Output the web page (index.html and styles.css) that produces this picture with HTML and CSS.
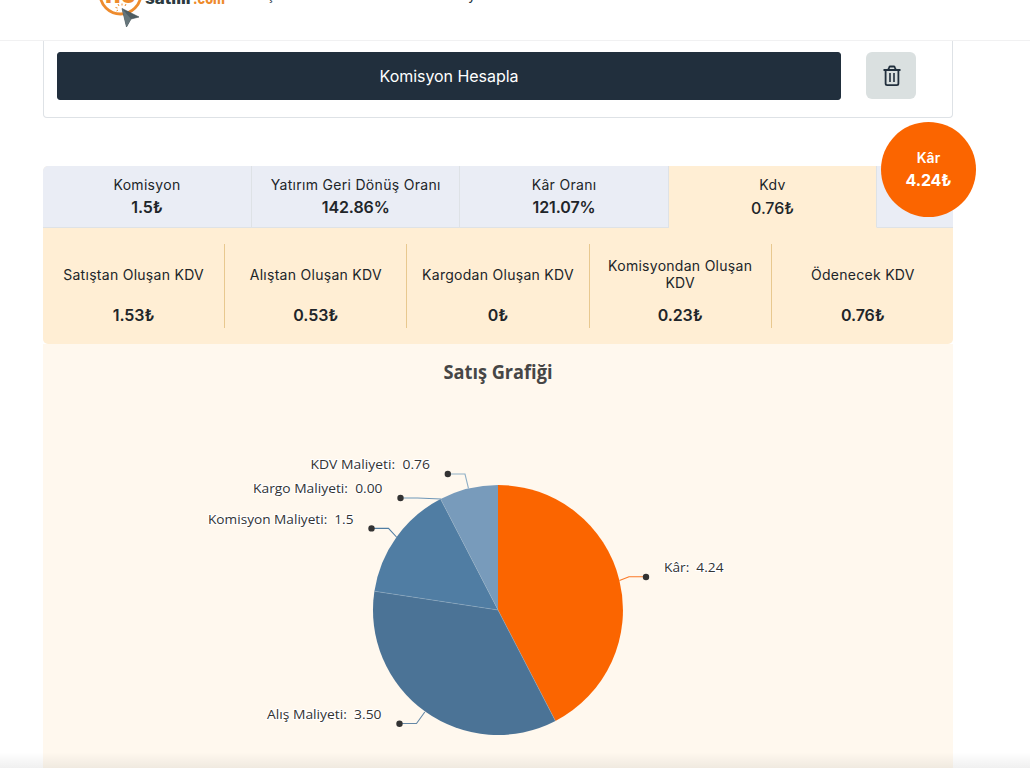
FILE: index.html
```html
<!DOCTYPE html>
<html lang="tr">
<head>
    <meta charset="UTF-8">
    <meta name="viewport" content="width=device-width, initial-scale=1.0">
    <title>Komisyon Hesapla</title>
    <link rel="stylesheet" href="styles.css">
</head>
<body>
    <header class="header">
        <svg class="logo" width="140" height="30" viewBox="95 0 140 30">
            <circle cx="120.5" cy="-6.5" r="20.5" fill="#fff" stroke="#ee8b2d" stroke-width="2.8"/>
            <text class="logo-mark" x="105" y="3" textLength="31" lengthAdjust="spacingAndGlyphs">no</text>
            <text class="logo-text" x="145" y="3.6" textLength="48" lengthAdjust="spacingAndGlyphs">satılır</text>
            <text class="logo-com" x="193" y="3.6" textLength="32" lengthAdjust="spacingAndGlyphs">.com</text>
            <path d="M117.500 8l-2-.5M119 6l-1-2M122 5.500v-2M125 6l1-2M118 10l-1.500 1" stroke="#ee8b2d" fill="none"/>
            <path d="M122 8.500l17 8.500-8 2-4.500 8z" fill="#4e5d63" stroke="#3b484e" stroke-width=".6"/>
            <path d="M122 8.500l9 10.500-4.500 8z" fill="#66767b"/>
        </svg>
        <nav class="nav">
            <a>Giriş</a>
            <a>Pazaryeri</a>
        </nav>
    </header>

    <div class="container">
        <div class="form-card">
            <button class="btn-calc">Komisyon Hesapla</button>
            <button class="btn-clear" aria-label="Temizle">
                <svg width="18" height="22" viewBox="0 0 18 22" fill="none" stroke="#212f3d" stroke-width="1.800">
                    <path d="M.500 5h17M2.600 5v13.500q0 1.600 1.600 1.600h9.600q1.600 0 1.600-1.600V5M5.300 4.500l.9-2.200q.3-.8 1.200-.8h3.200q.9 0 1.200.8l.9 2.200"/>
                    <path d="M7 8v9M11 8v9" stroke-width="1.600"/>
                </svg>
            </button>
        </div>

        <div class="result">
            <div class="profit">
                <span>Kâr</span>
                <strong>4.24₺</strong>
            </div>
            <div class="tabs">
                <div class="tab"><span>Komisyon</span><b>1.5₺</b></div>
                <div class="tab"><span>Yatırım Geri Dönüş Oranı</span><b>142.86%</b></div>
                <div class="tab"><span>Kâr Oranı</span><b>121.07%</b></div>
                <div class="tab active"><span>Kdv</span><b>0.76₺</b></div>
                <div class="tab"></div>
            </div>
            <div class="details">
                <div class="detail"><span>Satıştan Oluşan KDV</span><b>1.53₺</b></div>
                <div class="detail"><span>Alıştan Oluşan KDV</span><b>0.53₺</b></div>
                <div class="detail"><span>Kargodan Oluşan KDV</span><b>0₺</b></div>
                <div class="detail"><span>Komisyondan Oluşan KDV</span><b>0.23₺</b></div>
                <div class="detail"><span>Ödenecek KDV</span><b>0.76₺</b></div>
            </div>
            <div class="chart">
                <svg width="910" height="424" viewBox="43 344 910 424">
                    <text class="chart-title" x="443.500" y="379" textLength="109" lengthAdjust="spacingAndGlyphs">Satış Grafiği</text>

                    <!-- slices -->
                    <path d="M498 610V485A125 125 0 0 1 555.450 721z" fill="#fb6500"/>
                    <path d="M498 610L555.450 721A125 125 0 0 1 374.400 591.200z" fill="#4b7396"/>
                    <path d="M498 610L374.400 591.200A125 125 0 0 1 440.550 499z" fill="#507da3"/>
                    <path d="M498 610L440.550 499A125 125 0 0 1 498 485z" fill="#789bbb"/>
                    <path d="M374.400 591.200L498 610L440.550 499M498 610L555.450 721" fill="none" stroke="#9db5ca" stroke-width=".4"/>

                    <!-- connectors -->
                    <g fill="none" stroke-width="1.100">
                        <path d="M619.500 580.500L629 576.800H646" stroke="#fb7a28"/>
                        <path d="M424.800 712L416.500 723.500H399.500" stroke="#6588a6"/>
                        <path d="M396.500 537L388.500 528.400H371.500" stroke="#507da3"/>
                        <path d="M441 499L417.500 498H400.500" stroke="#6f97b8"/>
                        <path d="M468.500 488.500L465 474H448" stroke="#8fafc6"/>
                    </g>
                    <g fill="#333">
                        <circle cx="646" cy="577" r="3.200"/>
                        <circle cx="399.500" cy="723.800" r="3.200"/>
                        <circle cx="371.500" cy="528.400" r="3.200"/>
                        <circle cx="400.500" cy="498" r="3.200"/>
                        <circle cx="447.800" cy="474" r="3.200"/>
                    </g>

                    <g class="labels">
                        <text x="664" y="572" textLength="59.500" lengthAdjust="spacingAndGlyphs">Kâr:&#160; 4.24</text>
                        <text x="267" y="719" textLength="114.500" lengthAdjust="spacingAndGlyphs">Alış Maliyeti:&#160; 3.50</text>
                        <text x="208" y="524" textLength="145.500" lengthAdjust="spacingAndGlyphs">Komisyon Maliyeti:&#160; 1.5</text>
                        <text x="253" y="493" textLength="129.500" lengthAdjust="spacingAndGlyphs">Kargo Maliyeti:&#160; 0.00</text>
                        <text x="310.500" y="469" textLength="119.500" lengthAdjust="spacingAndGlyphs">KDV Maliyeti:&#160; 0.76</text>
                    </g>
                </svg>
            </div>
        </div>
    </div>
</body>
</html>
```
FILE: styles.css
```css
* {
    box-sizing: border-box;
}

body {
    margin: 0;
    height: 768px;
    overflow: hidden;
    background-color: #fff;
    color: #212529;
    font-family: Inter, sans-serif;
}

/* soft shade along the bottom edge of the window */
body::after {
    content: "";
    position: absolute;
    left: 0;
    right: 0;
    bottom: 0;
    height: 16px;
    background: linear-gradient(rgba(0, 0, 0, 0), rgba(0, 0, 0, 0.06));
}

.header {
    display: flex;
    height: 41px;
    padding-left: 95px;
    border-bottom: 1px solid #f1f1f2;
    overflow: hidden;
}

.logo text {
    font-family: Inter, sans-serif;
    font-weight: 800;
}

.logo-mark {
    font-size: 24px;
    fill: #ee8b2d;
}

.logo-text {
    font-size: 16px;
    fill: #2b3a40;
}

.logo-com {
    font-size: 14px;
    fill: #ee8b2d;
}

.nav {
    display: flex;
    gap: 156px;
    margin-top: -15px;
    padding-left: 9px;
    font-size: 14px;
    line-height: 20px;
    color: #212f3d;
}

.container {
    width: 910px;
    margin-left: 43px;
}

.form-card {
    display: flex;
    gap: 25px;
    height: 77px;
    padding: 11px 13px;
    border: 1px solid #dee2e6;
    border-top: 0;
    border-radius: 0 0 4px 4px;
}

.btn-calc {
    width: 784px;
    height: 48px;
    border: 1px solid #212f3d;
    border-radius: 3px;
    background-color: #212f3d;
    color: #fff;
    font-family: inherit;
    font-size: 16px;
    letter-spacing: -0.05px;
}

.btn-clear {
    display: flex;
    align-items: center;
    justify-content: center;
    width: 50px;
    height: 47px;
    padding: 0 0 0 1px;
    border: 0;
    border-radius: 6px;
    background-color: #dae0e0;
}

.result {
    position: relative;
    margin-top: 48px;
}

.profit {
    position: absolute;
    top: -44px;
    right: -23px;
    display: flex;
    flex-direction: column;
    align-items: center;
    width: 95px;
    height: 95px;
    padding-top: 26px;
    border-radius: 50%;
    background-color: #fb6500;
    color: #fff;
    font-size: 14px;
    font-weight: 600;
    line-height: 20px;
}

.profit strong {
    font-size: 16px;
    font-weight: 700;
    letter-spacing: -0.1px;
    line-height: 24px;
}

.tabs {
    display: flex;
    height: 62px;
    border-radius: 5px 0 0 0;
    background-color: #ffeed4;
    overflow: hidden;
}

.tab {
    display: flex;
    flex: 0 0 208.4px;
    flex-direction: column;
    align-items: center;
    padding-top: 9px;
    border-right: 1px solid #dee2e6;
    border-bottom: 1px solid #dee2e6;
    background-color: #eaedf5;
    font-size: 14px;
    letter-spacing: 0.3px;
    line-height: 20px;
}

.tab:first-child {
    flex-basis: 209px;
}

.tab b,
.detail b {
    font-size: 16px;
    font-weight: 600;
    letter-spacing: -0.1px;
    line-height: 24px;
}

.tab.active {
    border-bottom-color: #ffeed4;
    background-color: #ffeed4;
}

.tab.active b {
    padding-top: 1px;
    font-weight: 500;
}

.details {
    display: flex;
    height: 116px;
    padding: 16px 0;
    border-radius: 0 0 5px 5px;
    background-color: #ffeed4;
}

.detail {
    display: flex;
    flex: 0 0 182.2px;
    flex-direction: column;
    align-items: center;
    padding: 0 12px;
    border-right: 1px solid #e8c88f;
    font-size: 14px;
    letter-spacing: 0.28px;
    line-height: 17px;
    text-align: center;
}

.detail:last-child {
    border-right: 0;
}

.detail span {
    display: flex;
    align-items: center;
    height: 60px;
}

.detail b {
    margin-top: -1px;
}

.chart {
    height: 424px;
    background-color: #fff8ee;
}

.chart svg {
    display: block;
}

.chart-title {
    font-family: "Open Sans", "Noto Sans", sans-serif;
    font-size: 19px;
    font-weight: 700;
    fill: #464646;
}

.labels text {
    font-family: "Open Sans", "Noto Sans", sans-serif;
    font-size: 13.5px;
    fill: #333;
    stroke: #fff;
    stroke-width: 2px;
    paint-order: stroke;
}
```
